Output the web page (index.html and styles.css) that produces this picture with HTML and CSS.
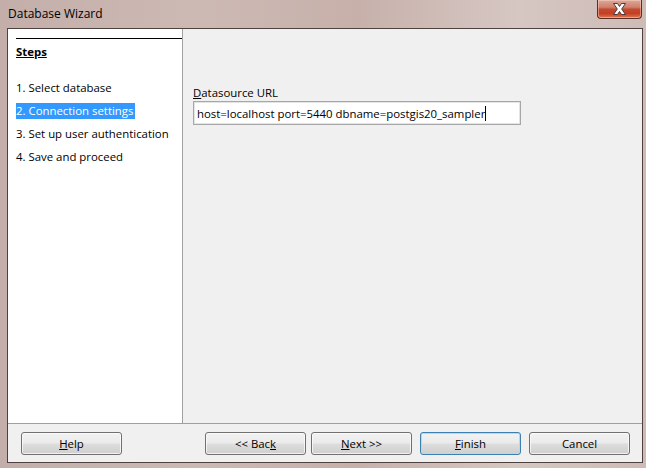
FILE: index.html
```html
<!DOCTYPE html>
<html>
<head>
<meta charset="utf-8">
<link rel="stylesheet" href="styles.css">
</head>
<body>
<div class="window">
  <div class="titlebar">
    <span class="title">Database Wizard</span>
    <div class="close">
      <svg width="15" height="12" viewBox="0 0 15 12"><path d="M1.5 0.5 H5.5 L7.5 3.5 L9.5 0.5 H13.5 L9.7 6 L13.5 11.5 H9.5 L7.5 8.5 L5.5 11.5 H1.5 L5.3 6 Z" fill="#ffffff" stroke="#4a3a3a" stroke-width="1"/></svg>
    </div>
  </div>
  <div class="client">
    <div class="main">
      <div class="steps">
        <div class="steps-rule"></div>
        <div class="steps-head">Steps</div>
        <ul class="step-list">
          <li>1. Select database</li>
          <li><span class="current">2. Connection settings</span></li>
          <li>3. Set up user authentication</li>
          <li>4. Save and proceed</li>
        </ul>
      </div>
      <div class="page">
        <div class="field-label"><u>D</u>atasource URL</div>
        <div class="textbox">host=localhost port=5440 dbname=postgis20_sampler<span class="caret"></span></div>
      </div>
    </div>
    <div class="buttons">
      <div class="btn"><u>H</u>elp</div>
      <div class="btn back">&lt;&lt; Bac<u>k</u></div>
      <div class="btn next"><u>N</u>ext &gt;&gt;</div>
      <div class="btn default"><u>F</u>inish</div>
      <div class="btn">Cancel</div>
    </div>
  </div>
</div>
</body>
</html>
```
FILE: styles.css
```css
* { box-sizing: border-box; }
html, body { margin: 0; padding: 0; }
body {
  width: 646px;
  height: 468px;
  overflow: hidden;
  font-family: "Open Sans", "Noto Sans", sans-serif;
  font-size: 11.4px;
  color: #000;
}
.window {
  width: 646px;
  height: 468px;
  background: linear-gradient(to right, #c3aea9 0%, #cdb9b4 30%, #c7b0aa 55%, #d6c7c3 80%, #cdbbb6 100%);
  display: flex;
  flex-direction: column;
}
.titlebar {
  height: 28px;
  display: flex;
  justify-content: space-between;
  align-items: flex-start;
  padding-left: 8px;
  padding-right: 4px;
}
.title {
  margin-top: 6px;
  font-size: 12px;
  line-height: 16px;
  color: #000;
}
.close {
  width: 45px;
  height: 19px;
  border: 1px solid #5b2f28;
  border-top: none;
  border-radius: 0 0 4px 4px;
  background: linear-gradient(to bottom, #dca898 0%, #d07f6c 40%, #c24a30 52%, #c53f22 75%, #dc7a52 100%);
  box-shadow: inset 0 0 0 1px rgba(255,220,210,0.45);
  display: flex;
  align-items: center;
  justify-content: center;
}
.client {
  margin: 0 3px 0 7px;
  height: 435px;
  border: 1px solid #4e4240;
  background: #f0f0f0;
  display: flex;
  flex-direction: column;
}
.main {
  height: 394px;
  display: flex;
}
.steps {
  width: 175px;
  background: #ffffff;
  border-right: 1px solid #a0a0a0;
  padding: 9px 0 0 8px;
}
.steps-rule {
  height: 1px;
  background: #000;
}
.steps-head {
  margin-top: 5px;
  font-weight: bold;
  text-decoration: underline;
  line-height: 16px;
}
.step-list {
  list-style: none;
  margin: 20px 0 0 0;
  padding: 0;
}
.step-list li {
  line-height: 16px;
  height: 16px;
  margin-bottom: 7px;
  white-space: nowrap;
}
.current {
  display: inline-block;
  background: #3399ff;
  color: #fff;
  padding-right: 2px;
}
.page {
  flex: 1;
  padding: 56px 0 0 10px;
}
.field-label {
  line-height: 16px;
}
.textbox {
  margin-top: 0;
  width: 328px;
  height: 24px;
  background: #fff;
  border: 1px solid #a7a7a7;
  box-shadow: inset 0 0 0 1px #e4e4e4;
  padding-left: 3px;
  padding-top: 1px;
  line-height: 22px;
  white-space: nowrap;
  display: flex;
  align-items: center;
}
.caret {
  display: inline-block;
  width: 1px;
  height: 15px;
  background: #000;
}
.buttons {
  flex: 1;
  border-top: 1px solid #a0a0a0;
  display: flex;
  align-items: flex-start;
  padding: 8px 12px 0 13px;
}
.btn {
  width: 101px;
  height: 23px;
  border: 1px solid #707070;
  border-radius: 3px;
  background: linear-gradient(to bottom, #f2f2f2 0%, #ebebeb 48%, #dddddd 52%, #cfcfcf 100%);
  box-shadow: inset 0 0 0 1px rgba(255,255,255,0.7);
  text-align: center;
  line-height: 21px;
}
.back { margin-left: auto; }
.next { margin-left: 5px; margin-right: 8px; }
.default {
  margin-right: 8px;
  border-color: #3c7fb1;
  box-shadow: inset 0 0 0 1px #a6e0f8;
}
```
